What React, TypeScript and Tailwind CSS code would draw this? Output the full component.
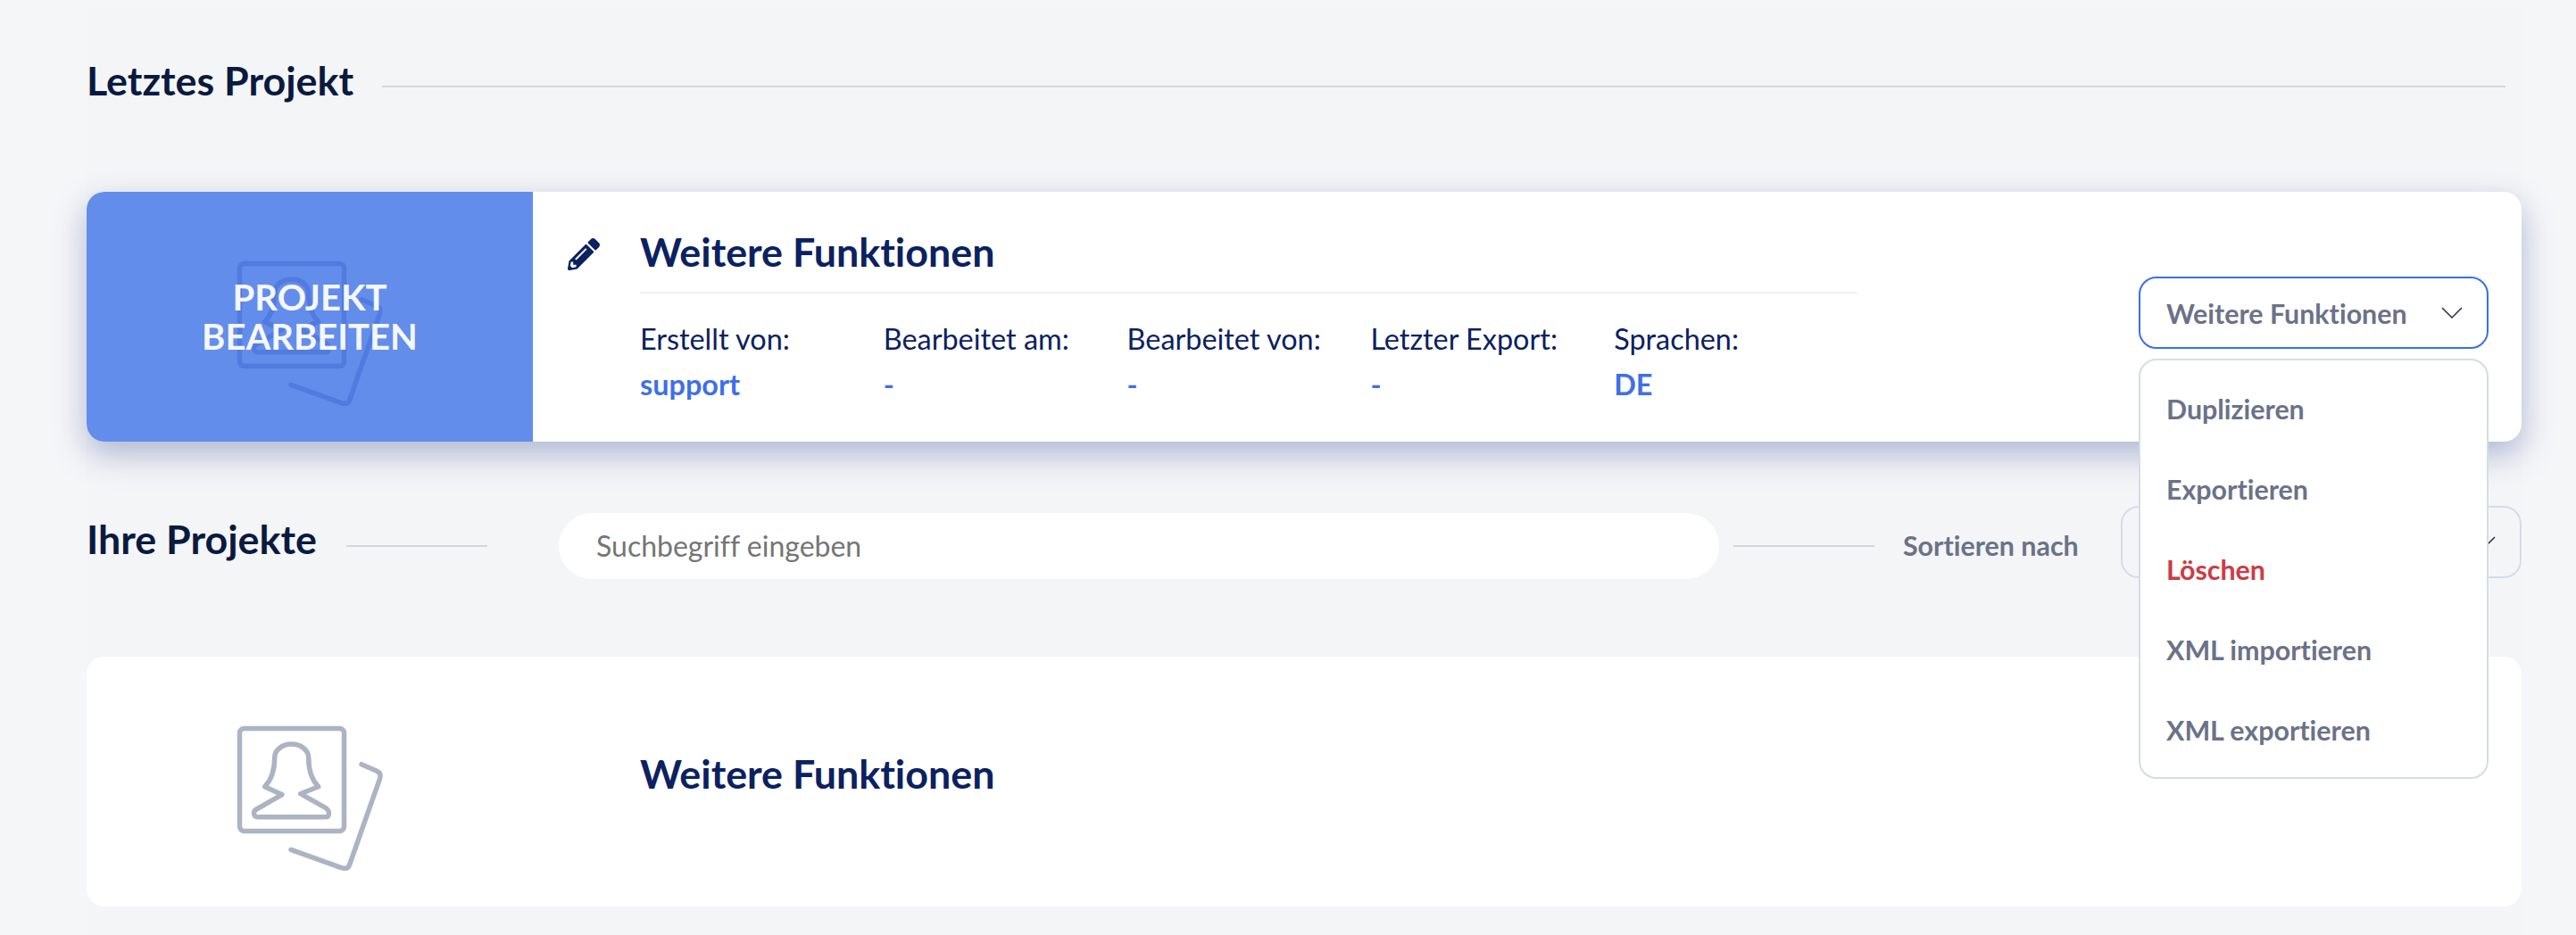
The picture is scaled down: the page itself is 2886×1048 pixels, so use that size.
import { FaPencilAlt } from 'react-icons/fa'

const labels = [
  { label: 'Erstellt von:', value: 'support' },
  { label: 'Bearbeitet am:', value: '-' },
  { label: 'Bearbeitet von:', value: '-' },
  { label: 'Letzter Export:', value: '-' },
  { label: 'Sprachen:', value: 'DE' },
]

function ProjectIcon({ className }: { className: string }) {
  return (
    <svg viewBox="0 0 170 170" width={170} height={170} fill="none" stroke="currentColor" strokeWidth={5.5} strokeLinecap="round" strokeLinejoin="round" className={className}>
      <rect x={6.5} y={5.5} width={117} height={115} rx={5} />
      <path d="M64.7 23C54 23 45.7 30 45.7 38C45.7 50 43 62 34.7 70.7L54 79.7L25.5 96Q22 98 22.5 101Q23 104.7 26.3 104.7L103 104.7Q106.5 104.7 106.5 100Q106.5 97 103 94.7L74.7 78.7L94.7 70.7C87 63 83.7 50 83.7 38C83.7 30 75 23 64.7 23Z" />
      <path d="M143 45.7L159.7 53Q165.5 55.5 163.7 61.3L129.7 158Q127.5 164.5 119.7 161.3L64 141.3" />
    </svg>
  )
}

function Chevron() {
  return (
    <svg viewBox="0 0 24 13" width={24} height={13} fill="none" stroke="#2b2f3a" strokeWidth={1.5} className="shrink-0">
      <path d="M1 1L12 12L23 1" />
    </svg>
  )
}

export default function App() {
  return (
    <div className="h-[1048px] w-[2886px] overflow-hidden bg-[#f5f6f8] pt-[10px] font-['Lato',sans-serif] [font-variant-ligatures:none]">
      <div className="ml-[97px] h-full w-[2728px] bg-[#f4f5f7] pt-[45px]">
        <div className="flex h-[84px] items-center pr-[18px]">
          <h1 className="pb-[14px] text-[44.8px] leading-none font-bold text-[#0a1a3f]">Letztes Projekt</h1>
          <div className="ml-[32px] h-[2px] flex-1 bg-[#d5d6d9]" />
        </div>

        <div className="relative mt-[76px] flex h-[280px] rounded-[20px] bg-white shadow-[0_14px_36px_rgba(60,80,150,0.38)]">
          <div className="relative flex w-[500px] shrink-0 items-center justify-center rounded-l-[20px] bg-[#638deb] pt-[40px]">
            <ProjectIcon className="text-[#527be0]" />
            <div className="absolute inset-0 flex items-center justify-center text-center text-[40px] leading-[44px] font-bold text-white/95">
              PROJEKT
              <br />
              BEARBEITEN
            </div>
          </div>
          <div className="flex flex-1 pl-[39px]">
            <FaPencilAlt className="mt-[52px] shrink-0 text-[36px] text-[#0b2161]" />
            <div className="ml-[45px] w-[1364px] pt-[40px]">
              <h2 className="border-b-2 border-[#f0f0f5] pb-[17px] text-[44.8px] leading-[55px] font-bold text-[#0b2161]">Weitere Funktionen</h2>
              <div className="mt-[26px] flex">
                {labels.map((item) => (
                  <div key={item.label} className="w-[273.5px]">
                    <div className="text-[32.4px] leading-[50px] text-[#0b2161]">{item.label}</div>
                    <div className="text-[32.4px] leading-[52px] font-bold text-[#3f6fe8]">{item.value}</div>
                  </div>
                ))}
              </div>
            </div>
          </div>
          <div className="absolute top-[95px] right-[37px] z-10 w-[392px]">
            <div className="flex h-[81px] items-center justify-between rounded-[20px] border-2 border-[#3b6fe8] bg-white pr-[27px] pl-[29px] text-[30.4px] font-bold text-[#6b7288]">
              <span className="pt-[2px]">Weitere Funktionen</span>
              <Chevron />
            </div>
            <div className="mt-[11px] flex h-[471px] flex-col justify-center rounded-[20px] border-2 border-[#d5dce8] bg-white pt-[3px] pl-[29px] text-[30.4px] font-bold text-[#6b7288]">
              <div className="flex h-[90px] items-center">Duplizieren</div>
              <div className="flex h-[90px] items-center">Exportieren</div>
              <div className="flex h-[90px] items-center text-[#cb3c46]">Löschen</div>
              <div className="flex h-[90px] items-center">XML importieren</div>
              <div className="flex h-[90px] items-center">XML exportieren</div>
            </div>
          </div>
        </div>

        <div className="mt-[72px] flex h-[81px] items-center">
          <h2 className="mb-[6px] w-[258px] text-[44.8px] leading-none font-bold whitespace-nowrap text-[#0a1a3f]">Ihre Projekte</h2>
          <div className="mt-[9px] ml-[33px] h-[2px] w-[158px] bg-[#d5d6d9]" />
          <div className="mt-[9px] ml-[80px] flex h-[74px] w-[1300px] items-center rounded-full bg-white pl-[42px] text-[32px] text-[#757575]">Suchbegriff eingeben</div>
          <div className="mt-[9px] ml-[16px] h-[2px] w-[158px] bg-[#d5d6d9]" />
          <div className="mt-[9px] ml-[32px] text-[30.4px] font-bold text-[#6b7288]">Sortieren nach</div>
          <div className="ml-auto flex h-[81px] w-[449px] items-center justify-end rounded-[20px] border-2 border-[#d5dce8] pr-[27px]">
            <Chevron />
          </div>
        </div>

        <div className="mt-[88px] flex h-[280px] rounded-[20px] bg-white">
          <div className="flex w-[500px] shrink-0 items-center justify-center pt-[40px]">
            <ProjectIcon className="text-[#acb4c4]" />
          </div>
          <h2 className="ml-[120px] self-center pb-[16px] text-[44.8px] font-bold text-[#0b2161]">Weitere Funktionen</h2>
        </div>
      </div>
    </div>
  )
}
